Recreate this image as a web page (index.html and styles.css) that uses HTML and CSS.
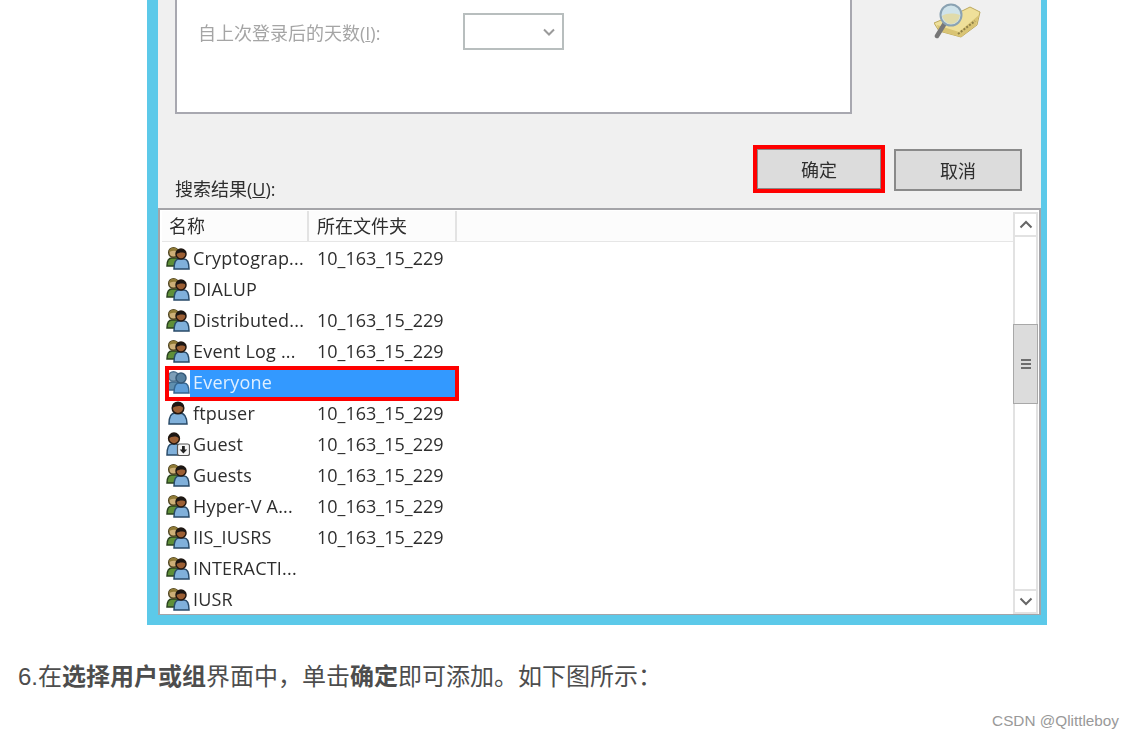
FILE: index.html
```html
<!DOCTYPE html>
<html lang="zh-CN">
<head>
<meta charset="utf-8">
<title>选择用户或组</title>
<link rel="stylesheet" href="styles.css">
</head>
<body>
<svg class="defs" width="0" height="0" aria-hidden="true">
  <defs>
    <symbol id="group" viewBox="0 0 24 24">
      <path d="M1 20c0-5 2-8 5-8h5c2 0 3 2 3 4v4H1z" fill="#5f8f38" stroke="#2a431e" stroke-width="1.500"/>
      <circle cx="7.500" cy="6.500" r="4.800" fill="#cdb078" stroke="#4f4522" stroke-width="1.500"/>
      <path d="M3 6c0-5 9-6 9.500 0-3-2-6-1-9.500 0z" fill="#8f7a36"/>
      <path d="M8 23c0-6 2-10 5-10h5c3 0 5 4 5 10z" fill="#80b0da" stroke="#284a68" stroke-width="1.500"/>
      <circle cx="15" cy="8" r="5" fill="#9c5f34" stroke="#241810" stroke-width="1.500"/>
      <path d="M10 8c0-6 10-7 10 0-3-2.500-6.500-1.500-10 0z" fill="#1c1714"/>
    </symbol>
    <symbol id="groupsel" viewBox="0 0 24 24">
      <path d="M1 20c0-5 2-8 5-8h5c2 0 3 2 3 4v4H1z" fill="#5f8fae" stroke="#3f6a8c" stroke-width="1.500"/>
      <circle cx="7.500" cy="6.500" r="4.800" fill="#7d9fb8" stroke="#4f7490" stroke-width="1.500"/>
      <path d="M8 23c0-6 2-10 5-10h5c3 0 5 4 5 10z" fill="#5f9fd8" stroke="#35668f" stroke-width="1.500"/>
      <circle cx="15" cy="8" r="5" fill="#56809f" stroke="#365a78" stroke-width="1.500"/>
    </symbol>
    <symbol id="user" viewBox="0 0 24 24">
      <path d="M3 23c0-7 2-11 6-11h5c4 0 7 4 7 11z" fill="#80b0da" stroke="#284a68" stroke-width="1.500"/>
      <circle cx="12" cy="7" r="5.800" fill="#9c5f34" stroke="#241810" stroke-width="1.500"/>
      <path d="M6.200 7c0-7.500 11.600-7.500 11.600 0-3-3-7.500-2.500-11.600 0z" fill="#1c1714"/>
    </symbol>
    <symbol id="guest" viewBox="0 0 24 24">
      <path d="M1 23c0-7 1-11 5-11h4c3 0 4 2 5 4v7z" fill="#80b0da" stroke="#284a68" stroke-width="1.500"/>
      <circle cx="8" cy="6.500" r="5.400" fill="#9c5f34" stroke="#241810" stroke-width="1.500"/>
      <path d="M2.600 6.500c0-7 10.800-7 10.800 0-3-3-7.500-2.500-10.800 0z" fill="#1c1714"/>
      <rect x="11.500" y="12" width="12" height="11.500" rx="2" fill="#f4f4f4" stroke="#555" stroke-width="1.200"/>
      <path d="M16 14h2.800v3.500h2.400l-3.800 4-3.800-4H16z" fill="#222"/>
    </symbol>
  </defs>
</svg>
<main class="article">
  <figure class="shot">
    <div class="dialog">
      <div class="upper">
        <div class="panel">
          <span class="muted">自上次登录后的天数(<u>I</u>):</span>
          <div class="select">
            <svg class="chev" width="12" height="8" viewBox="0 0 12 8"><path d="M1 1.500l5 5 5-5" fill="none" stroke="#9a9a9a" stroke-width="2"/></svg>
          </div>
        </div>
        <svg class="finder" width="48" height="38" viewBox="0 0 48 38">
          <path d="M0 20L24 10 36 4l10 5-3 13-16 12-22-6z" fill="#efe09a" stroke="#bda95e" stroke-width="1"/>
          <path d="M3 22l22 7 20-17-3 10-15 12-22-6z" fill="#d9c474"/>
          <path d="M24 31l17-13" stroke="#8f8048" stroke-width="2" stroke-dasharray="2 1.500"/>
          <path d="M3 33L11 20" stroke="#777" stroke-width="4.500" stroke-linecap="round"/>
          <circle cx="17" cy="12" r="10.500" fill="#cfe3ea" stroke="#8aa2b2" stroke-width="2"/>
          <path d="M8 13c5-3 11-3 18-1-1 6-5 9-9 9-4 0-7-3-9-8z" fill="#e0dbaa"/>
        </svg>
      </div>
      <div class="actions">
        <span class="results">搜索结果(<u>U</u>):</span>
        <button class="btn btn-ok" type="button">确定</button>
        <button class="btn" type="button">取消</button>
      </div>
      <div class="list">
        <div class="table">
          <div class="head">
            <span class="hcell hname">名称</span>
            <span class="hcell hfolder">所在文件夹</span>
          </div>
          <div class="row"><svg class="ico"><use href="#group"/></svg><span class="name">Cryptograp...</span><span class="folder">10_163_15_229</span></div>
          <div class="row"><svg class="ico"><use href="#group"/></svg><span class="name">DIALUP</span></div>
          <div class="row"><svg class="ico"><use href="#group"/></svg><span class="name">Distributed...</span><span class="folder">10_163_15_229</span></div>
          <div class="row"><svg class="ico"><use href="#group"/></svg><span class="name">Event Log ...</span><span class="folder">10_163_15_229</span></div>
          <div class="row row-sel"><svg class="ico"><use href="#groupsel"/></svg><span class="name sel-fill">Everyone</span></div>
          <div class="row"><svg class="ico"><use href="#user"/></svg><span class="name">ftpuser</span><span class="folder">10_163_15_229</span></div>
          <div class="row"><svg class="ico"><use href="#guest"/></svg><span class="name">Guest</span><span class="folder">10_163_15_229</span></div>
          <div class="row"><svg class="ico"><use href="#group"/></svg><span class="name">Guests</span><span class="folder">10_163_15_229</span></div>
          <div class="row"><svg class="ico"><use href="#group"/></svg><span class="name">Hyper-V A...</span><span class="folder">10_163_15_229</span></div>
          <div class="row"><svg class="ico"><use href="#group"/></svg><span class="name">IIS_IUSRS</span><span class="folder">10_163_15_229</span></div>
          <div class="row"><svg class="ico"><use href="#group"/></svg><span class="name">INTERACTI...</span></div>
          <div class="row"><svg class="ico"><use href="#group"/></svg><span class="name">IUSR</span></div>
        </div>
        <div class="scrollbar">
          <div class="sb-btn"><svg width="14" height="9" viewBox="0 0 14 9"><path d="M1.500 7.500L7 2l5.500 5.500" fill="none" stroke="#666" stroke-width="2"/></svg></div>
          <div class="sb-track sb-track-top"></div>
          <div class="sb-thumb"><span class="grip"></span></div>
          <div class="sb-track"></div>
          <div class="sb-btn"><svg width="14" height="9" viewBox="0 0 14 9"><path d="M1.500 1.500L7 7l5.500-5.500" fill="none" stroke="#666" stroke-width="2"/></svg></div>
        </div>
      </div>
    </div>
  </figure>
  <p class="step">6.在<strong>选择用户或组</strong>界面中，单击<strong>确定</strong>即可添加。如下图所示：</p>
  <p class="mark">CSDN @Qlittleboy</p>
</main>
</body>
</html>
```
FILE: styles.css
```css
html, body {
  margin: 0;
  padding: 0;
  height: 100%;
  overflow: hidden;
  background: #fff;
}
.defs { display: block; height: 0; }
.article {
  font-family: "Liberation Sans", "Noto Sans CJK SC", sans-serif;
}
.shot {
  box-sizing: border-box;
  width: 900px;
  height: 625px;
  margin: 0 0 0 147px;
  padding: 0 6px 10px 11px;
  background: #5cc9e9;
}
.dialog {
  height: 615px;
  display: flex;
  flex-direction: column;
  background: #f0f0f0;
  font-family: "Open Sans", "Noto Sans CJK SC", sans-serif;
  font-size: 18px;
  color: #2e2e2e;
  filter: blur(0.55px);
}
.upper {
  display: flex;
  align-items: flex-start;
  height: 114px;
  padding-left: 17px;
}
.panel {
  box-sizing: border-box;
  width: 677px;
  height: 114px;
  display: flex;
  align-items: flex-start;
  padding: 13px 0 0 21px;
  background: #fff;
  border: 2px solid #a8a8b0;
  border-top: 0;
}
.muted {
  width: 265px;
  margin-top: 2px;
  line-height: 37px;
  color: #a5a5a5;
  font-size: 18px;
  white-space: nowrap;
}
.select {
  box-sizing: border-box;
  width: 101px;
  height: 37px;
  display: flex;
  align-items: center;
  justify-content: flex-end;
  padding-right: 7px;
  background: #fff;
  border: 2px solid #b8bebe;
}
.finder { margin: 3px 0 0 82px; }
.actions {
  display: flex;
  align-items: flex-start;
  height: 93px;
  padding: 30px 19px 0 17px;
  box-sizing: border-box;
  margin-top: 1px;
}
.results {
  align-self: flex-end;
  margin-right: auto;
  line-height: 24px;
  margin-bottom: 7px;
  white-space: nowrap;
}
.btn {
  box-sizing: border-box;
  width: 128px;
  height: 42px;
  margin-top: 4px;
  padding: 0;
  background: #dcdcdc;
  border: 2px solid #8a8a8a;
  font: inherit;
  color: #2e2e2e;
}
.btn-ok {
  width: 132px;
  height: 48px;
  margin: 0 9px 0 0;
  border: 4px solid #fe0000;
  box-shadow: inset 0 0 0 1px #8a8a8a;
}
.list {
  flex: 1;
  display: flex;
  box-sizing: border-box;
  padding: 1px 0 0 2px;
  background: #fff;
  border: 2px solid #a4a4a8;
  border-bottom-width: 1px;
  min-height: 0;
}
.table {
  flex: 1;
  min-width: 0;
}
.head {
  display: flex;
  height: 31px;
  border-bottom: 1px solid #e6e6e6;
  background: #fcfcfc;
  box-sizing: border-box;
}
.hcell {
  box-sizing: border-box;
  line-height: 30px;
  border-right: 2px solid #e3e3e3;
  white-space: nowrap;
}
.hname { width: 147px; padding-left: 7px; }
.hfolder { width: 148px; padding-left: 8px; }
.row {
  display: flex;
  align-items: center;
  height: 31px;
  padding-left: 4px;
  position: relative;
  white-space: nowrap;
}
.ico {
  flex: none;
  width: 24px;
  height: 24px;
}
.name {
  width: 127px;
  padding-left: 3px;
  box-sizing: border-box;
  letter-spacing: 0.2px;
}
.row-sel { width: 291px; color: #dfefff; }
.sel-fill {
  flex: 1;
  align-self: stretch;
  line-height: 33px;
  background: #3399ff;
}
.row-sel::after {
  content: "";
  position: absolute;
  left: 3px;
  right: -2px;
  top: 0;
  bottom: -4px;
  border: 4px solid #fe0000;
}
.scrollbar {
  flex: none;
  width: 25px;
  margin: 1px 1px 0 0;
  display: flex;
  flex-direction: column;
}
.sb-btn {
  box-sizing: border-box;
  height: 25px;
  display: flex;
  align-items: center;
  justify-content: center;
  background: #fff;
  border: 2px solid #e2e2e2;
}
.sb-track {
  flex: 1;
  box-sizing: border-box;
  background: #fff;
  border-left: 2px solid #e2e2e2;
  border-right: 2px solid #e2e2e2;
}
.sb-track-top {
  flex: none;
  height: 87px;
}
.sb-thumb {
  box-sizing: border-box;
  height: 80px;
  flex: none;
  display: flex;
  align-items: center;
  justify-content: center;
  background: #dcdcdc;
  border: 1px solid #a8a8a8;
}
.grip {
  display: block;
  width: 10px;
  height: 2px;
  background: #6e6e6e;
  box-shadow: 0 4px 0 #6e6e6e, 0 -4px 0 #6e6e6e;
}
.step {
  margin: 38px 0 0 18px;
  font-size: 24px;
  line-height: 28px;
  color: #4d4d4d;
  white-space: nowrap;
}
.step strong { font-weight: 700; }
.mark {
  margin: 21px 15px 0 0;
  text-align: right;
  font-size: 15.3px;
  line-height: 18px;
  color: #999;
}
```
